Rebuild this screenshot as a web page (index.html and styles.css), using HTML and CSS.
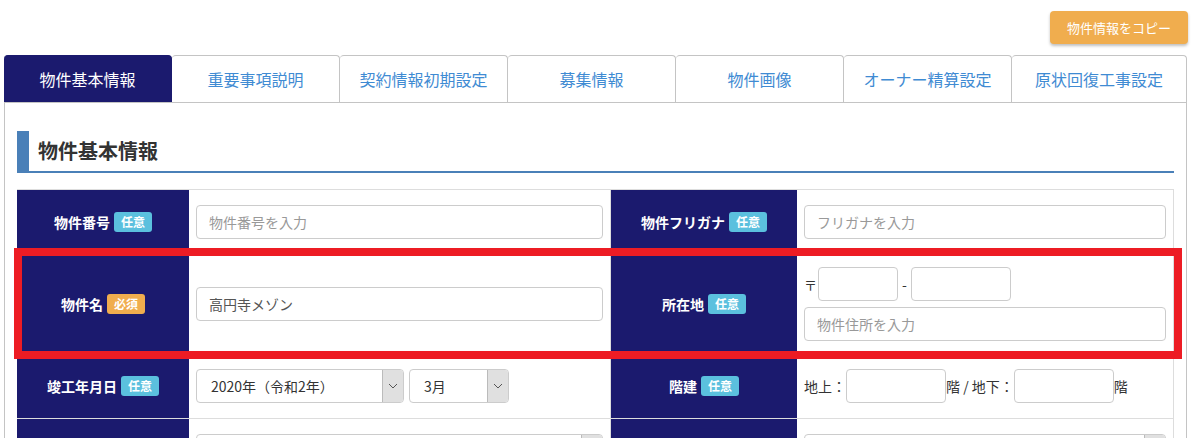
FILE: index.html
```html
<!DOCTYPE html>
<html lang="ja">
<head>
    <meta charset="UTF-8">
    <meta name="viewport" content="width=device-width, initial-scale=1.0">
    <title>物件基本情報</title>
    <link rel="stylesheet" href="styles.css">
</head>
<body>
    <div class="page">
        <div class="toolbar">
            <button class="copy-btn">物件情報をコピー</button>
        </div>

        <ul class="tabs">
            <li class="tab active">物件基本情報</li>
            <li class="tab">重要事項説明</li>
            <li class="tab">契約情報初期設定</li>
            <li class="tab">募集情報</li>
            <li class="tab">物件画像</li>
            <li class="tab">オーナー精算設定</li>
            <li class="tab">原状回復工事設定</li>
        </ul>

        <div class="panel">
            <h2 class="section-title">物件基本情報</h2>

            <div class="form-table">
                <div class="row">
                    <div class="label">物件番号<span class="badge optional">任意</span></div>
                    <div class="field"><input class="input" type="text" placeholder="物件番号を入力"></div>
                    <div class="label">物件フリガナ<span class="badge optional">任意</span></div>
                    <div class="field"><input class="input" type="text" placeholder="フリガナを入力"></div>
                </div>

                <div class="row highlight">
                    <div class="label">物件名<span class="badge required">必須</span></div>
                    <div class="field"><input class="input" type="text" value="高円寺メゾン"></div>
                    <div class="label">所在地<span class="badge optional">任意</span></div>
                    <div class="field address">
                        <div class="postal">
                            <span class="mark">〒</span>
                            <input class="input zip1" type="text">
                            <span class="dash">-</span>
                            <input class="input zip2" type="text">
                        </div>
                        <input class="input" type="text" placeholder="物件住所を入力">
                    </div>
                </div>

                <div class="row">
                    <div class="label">竣工年月日<span class="badge optional">任意</span></div>
                    <div class="field inline">
                        <div class="select year">
                            <span class="value">2020年（令和2年）</span>
                            <span class="arrow"><svg width="10" height="6" viewBox="0 0 10 6"><path d="M1 1l4 4 4-4" fill="none" stroke="#555" stroke-width="1"/></svg></span>
                        </div>
                        <div class="select month">
                            <span class="value">3月</span>
                            <span class="arrow"><svg width="10" height="6" viewBox="0 0 10 6"><path d="M1 1l4 4 4-4" fill="none" stroke="#555" stroke-width="1"/></svg></span>
                        </div>
                    </div>
                    <div class="label">階建<span class="badge optional">任意</span></div>
                    <div class="field inline floors">
                        <span>地上：</span>
                        <input class="input floor" type="text">
                        <span>階 / 地下：</span>
                        <input class="input floor" type="text">
                        <span>階</span>
                    </div>
                </div>

                <div class="row">
                    <div class="label"></div>
                    <div class="field">
                        <div class="select wide">
                            <span class="value"></span>
                            <span class="arrow"><svg width="10" height="6" viewBox="0 0 10 6"><path d="M1 1l4 4 4-4" fill="none" stroke="#555" stroke-width="1"/></svg></span>
                        </div>
                    </div>
                    <div class="label"></div>
                    <div class="field">
                        <div class="select wide">
                            <span class="value"></span>
                            <span class="arrow"><svg width="10" height="6" viewBox="0 0 10 6"><path d="M1 1l4 4 4-4" fill="none" stroke="#555" stroke-width="1"/></svg></span>
                        </div>
                    </div>
                </div>
            </div>
        </div>
    </div>
</body>
</html>
```

FILE: styles.css
```css
:root {
    --navy: #1b1a6e;
    --tab-text: #3f8bd3;
    --heading-blue: #4a80b8;
    --orange: #f0ad4e;
    --info: #5bc0de;
    --line: #dddddd;
    --tab-border: #c4c4c4;
}

* {
    box-sizing: border-box;
    font-family: 'Noto Sans CJK JP', 'Noto Sans', sans-serif;
}

body {
    margin: 0;
    background: #fff;
    color: #333;
    overflow: hidden;
}

.page {
    padding: 0 7px 0 4px;
    height: 438px;
    overflow: hidden;
}

.toolbar {
    display: flex;
    justify-content: flex-end;
    padding-top: 11px;
    height: 55px;
}

.copy-btn {
    height: 33px;
    margin-right: -1px;
    padding: 0 17px;
    background: var(--orange);
    color: #fff;
    border: none;
    border-radius: 4px;
    font-size: 13px;
    box-shadow: 0 2px 3px rgba(0,0,0,0.25);
}

.tabs {
    display: flex;
    margin: 0;
    padding: 0;
    list-style: none;
}

.tab {
    width: 168px;
    height: 47px;
    display: flex;
    align-items: center;
    justify-content: center;
    border: 1px solid var(--tab-border);
    border-bottom: none;
    border-left: none;
    border-radius: 4px 4px 0 0;
    color: var(--tab-text);
    font-size: 16px;
}

.tab:last-child {
    flex: 1;
}

.tab.active {
    background: var(--navy);
    border-color: var(--navy);
    color: #fff;
}

.panel {
    border: 1px solid var(--tab-border);
    border-bottom: none;
    padding: 28px 12px 0;
    height: 336px;
}

.section-title {
    margin: 0 0 16px;
    height: 42px;
    line-height: 40px;
    padding-left: 9px;
    border-left: 12px solid var(--heading-blue);
    border-bottom: 2px solid var(--heading-blue);
    font-size: 20px;
    font-weight: bold;
    color: #333;
}

.form-table {
    border-top: 1px solid var(--line);
    border-right: 1px solid var(--line);
}

.row {
    display: grid;
    grid-template-columns: 172px 421px 187px 1fr;
    border-bottom: 1px solid var(--line);
}

.row.highlight {
    position: relative;
}

/* red annotation frame */
.row.highlight::after {
    content: "";
    position: absolute;
    top: -7px;
    left: -3px;
    right: -9px;
    bottom: -6px;
    border: 8px solid #ed1c24;
    pointer-events: none;
}

.label {
    background: var(--navy);
    color: #fff;
    font-size: 14px;
    font-weight: bold;
    display: flex;
    align-items: center;
    justify-content: center;
    border-left: 1px solid var(--line);
}

.label:first-child {
    border-left: none;
}

.badge {
    margin-left: 4px;
    padding: 0 7px;
    line-height: 20px;
    border-radius: 3px;
    font-size: 12px;
    font-weight: bold;
    color: #fff;
}

.badge.optional {
    background: var(--info);
}

.badge.required {
    background: var(--orange);
}

.field {
    display: flex;
    align-items: center;
    padding: 15px 7px;
    font-size: 14px;
    color: #333;
}

.input {
    width: 100%;
    height: 34px;
    padding: 6px 12px;
    border: 1px solid #ccc;
    border-radius: 4px;
    font-size: 14px;
    color: #555;
    background: #fff;
}

.input::placeholder {
    color: #999;
}

.field.address {
    flex-direction: column;
    align-items: stretch;
    gap: 6px;
    padding: 12px 7px;
}

.postal {
    display: flex;
    align-items: center;
}

.postal .mark {
    width: 14px;
    font-size: 13px;
}

.input.zip1 {
    width: 80px;
}

.input.zip2 {
    width: 100px;
}

.postal .dash {
    width: 13px;
    text-align: center;
}

.field.inline {
    gap: 5px;
}

.field.floors {
    gap: 0;
}

.input.floor {
    width: 100px;
}

.select {
    display: flex;
    height: 34px;
    border: 1px solid #ccc;
    border-radius: 4px;
    overflow: hidden;
    background: #fff;
}

.select .value {
    flex: 1;
    display: flex;
    align-items: center;
    padding-left: 14px;
    color: #333;
    font-size: 14px;
}

.select .arrow {
    width: 21px;
    display: flex;
    align-items: center;
    justify-content: center;
    background: #e0e0e0;
    border-left: 1px solid #bbb;
}

.select.year {
    width: 208px;
}

.select.month {
    width: 100px;
}

.select.wide {
    width: 100%;
}
```
